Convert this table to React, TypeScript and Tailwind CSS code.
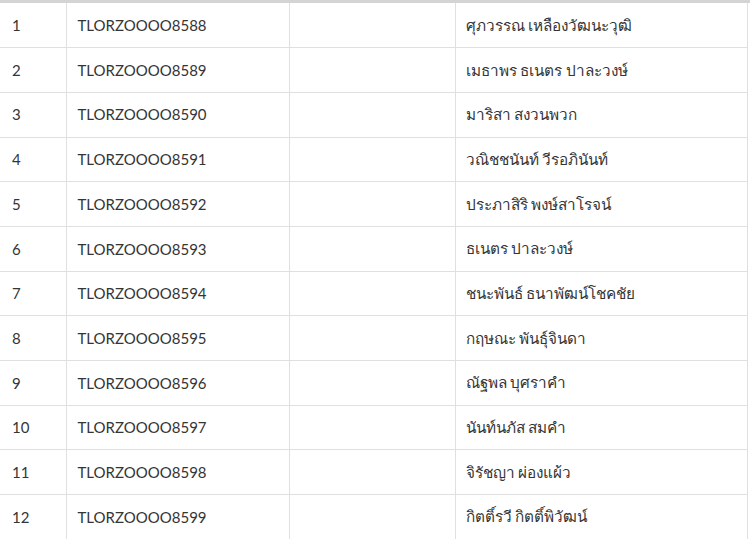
const rows = [
  ['1', 'TLORZOOOO8588', 'ศุภวรรณ เหลืองวัฒนะวุฒิ'],
  ['2', 'TLORZOOOO8589', 'เมธาพร ธเนตร ปาละวงษ์'],
  ['3', 'TLORZOOOO8590', 'มาริสา สงวนพวก'],
  ['4', 'TLORZOOOO8591', 'วณิชชนันท์ วีรอภินันท์'],
  ['5', 'TLORZOOOO8592', 'ประภาสิริ พงษ์สาโรจน์'],
  ['6', 'TLORZOOOO8593', 'ธเนตร ปาละวงษ์'],
  ['7', 'TLORZOOOO8594', 'ชนะพันธ์ ธนาพัฒน์โชคชัย'],
  ['8', 'TLORZOOOO8595', 'กฤษณะ พันธุ์จินดา'],
  ['9', 'TLORZOOOO8596', 'ณัฐพล บุศราคำ'],
  ['10', 'TLORZOOOO8597', 'นันท์นภัส สมคำ'],
  ['11', 'TLORZOOOO8598', 'จิรัชญา ผ่องแผ้ว'],
  ['12', 'TLORZOOOO8599', 'กิตติ์รวี กิตติ์พิวัฒน์'],
];

export default function App() {
  return (
    <div className="w-[750px] h-[539px] bg-white overflow-hidden border-t-[3px] border-[#d4d4d4]">
      <table className="table-fixed w-[748px] border-collapse text-[15px] text-[#353535] font-['Lato','Noto_Sans',sans-serif]">
        <colgroup>
          <col className="w-[66px]" />
          <col className="w-[223px]" />
          <col className="w-[166px]" />
          <col />
        </colgroup>
        <tbody>
          {rows.map(([n, code, name]) => (
            <tr key={n} className="h-[44.7px] border-b border-[#e0e0e0]">
              <td className="pl-3 border-r border-[#e0e0e0]">{n}</td>
              <td className="pl-[11px] border-r border-[#e0e0e0]">{code}</td>
              <td className="border-r border-[#e0e0e0]"></td>
              <td className="pl-[10px] border-r border-[#e0e0e0] text-[15.3px]">{name}</td>
            </tr>
          ))}
        </tbody>
      </table>
    </div>
  );
}
